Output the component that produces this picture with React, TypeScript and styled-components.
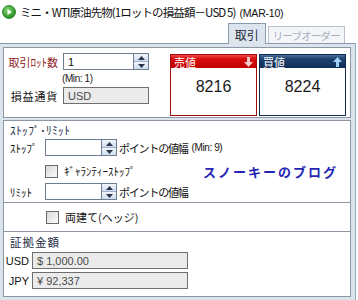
import React from 'react';
import styled, { createGlobalStyle } from 'styled-components';

const GlobalStyle = createGlobalStyle`
	html, body {
		margin: 0;
		padding: 0;
		background: #fff;
	}
	body {
		font-family: "Noto Sans CJK JP", "Liberation Sans", sans-serif;
		font-size: 11px;
		color: #111;
	}
`;

const Window = styled.div`
	width: 358px;
	height: 300px;
	display: flex;
	flex-direction: column;
	overflow: hidden;
	background: #fff;
`;

const TitleBar = styled.div`
	height: 24px;
	display: flex;
	align-items: center;
	gap: 4px;
	padding-left: 2px;
	white-space: nowrap;
`;

const TitleText = styled.span`
	font-size: 11.5px;
	letter-spacing: -0.9px;
	color: #111;
`;

const Expiry = styled.span`
	font-family: "Liberation Sans", sans-serif;
	font-size: 10.5px;
	letter-spacing: -0.2px;
	margin-left: 4px;
`;

const TabBar = styled.div`
	height: 19px;
	display: flex;
	justify-content: flex-end;
	align-items: flex-end;
	gap: 2px;
	padding-right: 13px;
`;

const Tab = styled.div<{ $active?: boolean }>`
	position: relative;
	z-index: 1;
	box-sizing: border-box;
	height: ${(p) => (p.$active ? 21 : 17)}px;
	margin-bottom: ${(p) => (p.$active ? -1 : 0)}px;
	padding: 0 ${(p) => (p.$active ? 6 : 4)}px;
	display: flex;
	align-items: center;
	background: ${(p) => (p.$active ? '#dce4ed' : '#f3f5f8')};
	border: 1px solid ${(p) => (p.$active ? '#8a9bb0' : '#b8c2ce')};
	border-bottom: none;
	color: ${(p) => (p.$active ? '#1c2838' : '#a8b1bc')};
	font-size: ${(p) => (p.$active ? 12 : 10.5)}px;
	letter-spacing: ${(p) => (p.$active ? 0 : -0.8)}px;
`;

const Frame = styled.div`
	flex: 1;
	width: 356px;
	box-sizing: border-box;
	background: #dbe3ec;
	border-top: 1px solid #8a9bb0;
	border-right: 1px solid #98a9bb;
	padding: 3px 4px 3px 3px;
	display: flex;
	flex-direction: column;
	gap: 2px;
`;

const TradePanel = styled.div`
	height: 71px;
	box-sizing: border-box;
	background: #fff;
	border: 1px solid #8c97a3;
	display: flex;
	padding: 5px 4px 0 2px;
`;

const LotGrid = styled.div`
	display: grid;
	grid-template-columns: 52px 86px;
	grid-template-rows: 17px 17px 17px;
	column-gap: 5px;
	align-items: center;
`;

const Label = styled.span<{ $tone?: 'red' | 'plain' }>`
	text-align: right;
	white-space: nowrap;
	color: ${(p) => (p.$tone === 'red' ? '#8e1b1b' : '#111')};
	letter-spacing: ${(p) => (p.$tone === 'red' ? 0 : 0.8)}px;
`;

const MinNote = styled.span`
	font-family: "Liberation Sans", sans-serif;
	font-size: 10px;
	letter-spacing: -0.4px;
	margin-left: -1px;
	color: #222;
	white-space: nowrap;
`;

const NumberField = styled.div<{ $width: number }>`
	display: flex;
	height: 17px;
	width: ${(p) => p.$width}px;
`;

const InputBox = styled.div<{ $disabled?: boolean }>`
	flex: 1;
	box-sizing: border-box;
	height: 17px;
	display: flex;
	align-items: center;
	padding-left: 4px;
	background: ${(p) => (p.$disabled ? '#ebebeb' : '#fff')};
	border: 1px solid ${(p) => (p.$disabled ? '#6f6f6f' : '#6d7d92')};
	color: ${(p) => (p.$disabled ? '#4a4a4a' : '#111')};
	font-family: "Liberation Sans", sans-serif;
	font-size: 11px;
	white-space: nowrap;
`;

const Spin = styled.div`
	width: 16px;
	box-sizing: border-box;
	height: 17px;
	margin-left: -1px;
	border: 1px solid #6d7d92;
	display: flex;
	flex-direction: column;
	background: #dde7f3;
`;

const SpinButton = styled.div`
	flex: 1;
	display: flex;
	align-items: center;
	justify-content: center;
	background: linear-gradient(#f2f6fb, #cfdcec);
	& + & {
		border-top: 1px solid #9fb1c8;
	}
`;

const PricePair = styled.div`
	margin-left: auto;
	margin-top: 1px;
	display: flex;
	gap: 2px;
`;

const PriceBox = styled.div<{ $side: 'sell' | 'buy' }>`
	width: 87px;
	height: 62px;
	box-sizing: border-box;
	border: 1px solid ${(p) => (p.$side === 'sell' ? '#a00d0d' : '#0f2d52')};
	display: flex;
	flex-direction: column;
	background: #fff;
`;

const PriceHead = styled.div<{ $side: 'sell' | 'buy' }>`
	height: 13px;
	display: flex;
	align-items: center;
	justify-content: space-between;
	padding: 0 3px 0 3px;
	color: #fff;
	font-size: 11px;
	background: ${(p) =>
		p.$side === 'sell'
			? 'linear-gradient(#ef4a4a 0%, #d60d0d 30%, #c20000 100%)'
			: 'linear-gradient(#4d6f98 0%, #1d416d 30%, #0f2d55 100%)'};
`;

const PriceValue = styled.div`
	flex: 1;
	display: flex;
	justify-content: center;
	padding-top: 10px;
	font-family: "Liberation Sans", sans-serif;
	font-size: 16px;
	color: #1a1a1a;
`;

const OrderBox = styled.div`
	flex: 1;
	background: #fff;
	border: 1px solid #8c97a3;
	display: flex;
	flex-direction: column;
`;

const StopSection = styled.div`
	height: 82px;
	box-sizing: border-box;
	padding: 2px 0 0 6px;
	border-bottom: 1px solid #8c97a3;
	display: flex;
	flex-direction: column;
`;

const Heading = styled.div`
	height: 14px;
	line-height: 14px;
	color: #1b2a44;
	white-space: nowrap;
`;

const StopHeading = styled(Heading)`
	font-size: 11.5px;
	letter-spacing: 0.3px;
`;

const Row = styled.div<{ $top: number }>`
	display: flex;
	align-items: center;
	margin-top: ${(p) => p.$top}px;
	white-space: nowrap;
`;

const RowLabel = styled.span`
	width: 35px;
	flex: none;
`;

const Unit = styled.span`
	margin-left: 2px;
	letter-spacing: -1.2px;
`;

const UnitNote = styled.span`
	font-family: "Liberation Sans", sans-serif;
	font-size: 10px;
	letter-spacing: -0.4px;
	margin-left: 4px;
`;

const CheckBox = styled.span`
	width: 13px;
	height: 13px;
	box-sizing: border-box;
	flex: none;
	border: 1px solid #6b6b6b;
	background: linear-gradient(135deg, #d9d9d9, #fbfbfb);
`;

const CheckLabel = styled.span`
	margin-left: 6px;
`;

const BlogMark = styled.span`
	margin-left: auto;
	margin-right: 12px;
	color: #2626b4;
	font-weight: bold;
	font-size: 13px;
	letter-spacing: 2px;
	line-height: 13px;
`;

const HedgeSection = styled.div`
	height: 29px;
	box-sizing: border-box;
	padding-left: 42px;
	border-bottom: 1px solid #8c97a3;
	display: flex;
	align-items: center;
`;

const MarginSection = styled.div`
	flex: 1;
	display: grid;
	grid-template-columns: 25px 156px;
	grid-template-rows: 14px 17px 17px;
	column-gap: 3px;
	row-gap: 3px;
	padding-top: 3px;
	align-items: center;
`;

const MarginHeading = styled(Heading)`
	grid-column: 1 / 3;
	padding-left: 6px;
	letter-spacing: 1px;
	font-size: 11.5px;
`;

const CurrencyLabel = styled.span`
	text-align: right;
	font-family: "Liberation Sans", sans-serif;
	font-size: 11px;
`;

const PlayIcon = () => (
	<svg width="14" height="14" viewBox="0 0 14 14">
		<defs>
			<radialGradient id="g" cx="0.4" cy="0.35" r="0.7">
				<stop offset="0" stopColor="#7ed36a" />
				<stop offset="1" stopColor="#1f8a1f" />
			</radialGradient>
		</defs>
		<circle cx="7" cy="7" r="6.5" fill="url(#g)" stroke="#1d7a1d" strokeWidth="0.8" />
		<path d="M5.5 4 L10 7 L5.5 10 Z" fill="#fff" />
	</svg>
);

const Arrow = ({ up, color }: { up?: boolean; color: string }) => (
	<svg width="9" height="10" viewBox="0 0 9 10">
		<path
			d={up ? 'M4.5 0 L9 5 H6 V10 H3 V5 H0 Z' : 'M3 0 H6 V5 H9 L4.5 10 L0 5 H3 Z'}
			fill={color}
		/>
	</svg>
);

const Tri = ({ up }: { up?: boolean }) => (
	<svg width="7" height="4" viewBox="0 0 7 4">
		<path d={up ? 'M3.5 0 L7 4 H0 Z' : 'M0 0 H7 L3.5 4 Z'} fill="#26354d" />
	</svg>
);

const Spinner = () => (
	<Spin>
		<SpinButton>
			<Tri up />
		</SpinButton>
		<SpinButton>
			<Tri />
		</SpinButton>
	</Spin>
);

const App = () => {
	return (
		<>
			<GlobalStyle />
			<Window>
				<TitleBar>
					<PlayIcon />
					<TitleText>
						ミニ・WTI原油先物(1ロットの損益額－USD 5)
						<Expiry>(MAR-10)</Expiry>
					</TitleText>
				</TitleBar>
				<TabBar>
					<Tab $active>取引</Tab>
					<Tab>リーブオーダー</Tab>
				</TabBar>
				<Frame>
					<TradePanel>
						<LotGrid>
							<Label $tone="red">取引ﾛｯﾄ数</Label>
							<NumberField $width={86}>
								<InputBox>1</InputBox>
								<Spinner />
							</NumberField>
							<span />
							<MinNote>(Min: 1)</MinNote>
							<Label>損益通貨</Label>
							<NumberField $width={86}>
								<InputBox $disabled>USD</InputBox>
							</NumberField>
						</LotGrid>
						<PricePair>
							<PriceBox $side="sell">
								<PriceHead $side="sell">
									<span>売値</span>
									<Arrow color="#f6c9c9" />
								</PriceHead>
								<PriceValue>8216</PriceValue>
							</PriceBox>
							<PriceBox $side="buy">
								<PriceHead $side="buy">
									<span>買値</span>
									<Arrow up color="#9fd0f6" />
								</PriceHead>
								<PriceValue>8224</PriceValue>
							</PriceBox>
						</PricePair>
					</TradePanel>
					<OrderBox>
						<StopSection>
							<StopHeading>ｽﾄｯﾌﾟ･ﾘﾐｯﾄ</StopHeading>
							<Row $top={2}>
								<RowLabel>ｽﾄｯﾌﾟ</RowLabel>
								<NumberField $width={72}>
									<InputBox />
									<Spinner />
								</NumberField>
								<Unit>ポイントの値幅</Unit>
								<UnitNote>(Min: 9)</UnitNote>
							</Row>
							<Row $top={7}>
								<RowLabel />
								<CheckBox />
								<CheckLabel>ｷﾞｬﾗﾝﾃｨｰｽﾄｯﾌﾟ</CheckLabel>
								<BlogMark>スノーキーのブログ</BlogMark>
							</Row>
							<Row $top={4}>
								<RowLabel>ﾘﾐｯﾄ</RowLabel>
								<NumberField $width={72}>
									<InputBox />
									<Spinner />
								</NumberField>
								<Unit>ポイントの値幅</Unit>
							</Row>
						</StopSection>
						<HedgeSection>
							<CheckBox />
							<CheckLabel>両建て(ヘッジ)</CheckLabel>
						</HedgeSection>
						<MarginSection>
							<MarginHeading>証拠金額</MarginHeading>
							<CurrencyLabel>USD</CurrencyLabel>
							<InputBox $disabled>$ 1,000.00</InputBox>
							<CurrencyLabel>JPY</CurrencyLabel>
							<InputBox $disabled>¥ 92,337</InputBox>
						</MarginSection>
					</OrderBox>
				</Frame>
			</Window>
		</>
	);
};

export default App;
